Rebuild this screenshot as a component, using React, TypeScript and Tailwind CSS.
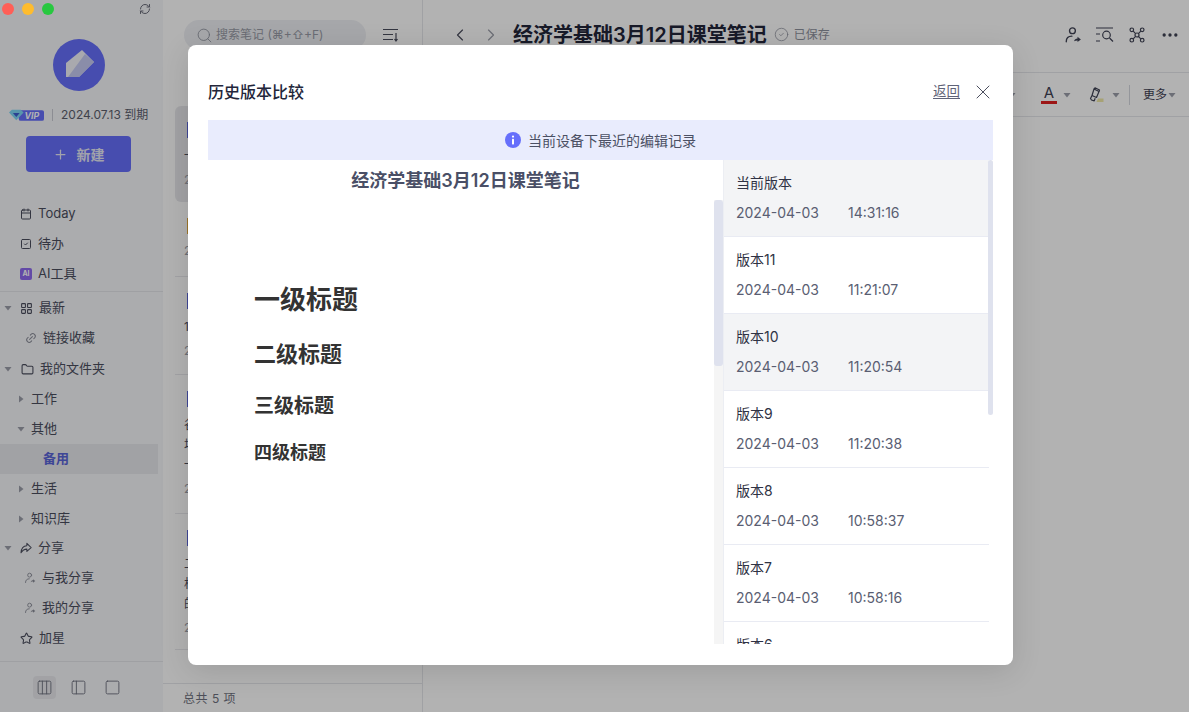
import {
  Calendar, SquareCheck, LayoutGrid, Link2, Folder, Star, Columns3, PanelLeft, Square, Search, X,
  ChevronLeft, ChevronRight, Ellipsis, RefreshCw, Plus, CircleCheck,
} from "lucide-react";

const FONT = { fontFamily: 'Inter, "Noto Sans CJK SC", sans-serif' };

const VERSIONS = [
  { name: "当前版本", time: "14:31:16", grey: true },
  { name: "版本11", time: "11:21:07" },
  { name: "版本10", time: "11:20:54", grey: true },
  { name: "版本9", time: "11:20:38" },
  { name: "版本8", time: "10:58:37" },
  { name: "版本7", time: "10:58:16" },
  { name: "版本6", time: "" },
];

const NOTES = [
  { h: "h-[96px] mt-[56px] bg-[#e8e9ec] rounded-md", mark: "bg-[#5a65d7]", lines: ["一级标题"], date: "2024-04-03" },
  { h: "h-[75px]", mark: "bg-[#e0a63c]", lines: [], date: "2024-04-02" },
  { h: "h-[98px]", mark: "bg-[#5a65d7]", lines: ["1月数据"], date: "2024-04-01" },
  { h: "h-[139px]", mark: "bg-[#5a65d7]", lines: ["谷物市场", "场景分析", "一般规律"], date: "2024-03-28" },
  { h: "h-[136px]", mark: "bg-[#5a65d7]", lines: ["二级市场", "析出价格", "的原理"], date: "2024-03-20" },
];

function Caret({ open, className = "" }: { open?: boolean; className?: string }) {
  return (
    <svg viewBox="0 0 8 8" className={`h-2 w-2 shrink-0 ${className}`} fill="#9b9eaa">
      {open ? <path d="M0.5 2h7L4 6.5z" /> : <path d="M2 0.5v7L6.5 4z" />}
    </svg>
  );
}

function SideRow({ icon, label, caret, indent = 20, gap = 6, active, className = "" }: { icon?: React.ReactNode; label: string; caret?: "open" | "closed"; indent?: number; gap?: number; active?: boolean; className?: string }) {
  return (
    <div className={`relative flex h-[30px] items-center text-[13px] ${active ? "mr-[5px] bg-[#e7e8ec] font-semibold text-[#5a65d7]" : "text-[#4b4e5e]"} ${className}`} style={{ paddingLeft: indent, gap }}>
      {caret && <Caret open={caret === "open"} className={`absolute ${indent < 25 ? "left-[4px]" : "left-[17px]"}`} />}
      {icon}
      <span>{label}</span>
    </div>
  );
}

function UserShare({ className = "" }: { className?: string }) {
  return (
    <svg viewBox="0 0 16 16" className={className} fill="none" stroke="currentColor" strokeWidth="1.2" strokeLinecap="round">
      <circle cx="7.5" cy="4.2" r="2.6" />
      <path d="M2 14c0-3.2 2-5 5-5" />
      <path d="M9 13.5c.3-1.6 1.5-2.5 3-2.5V9.5l3 2.5-3 2.3v-1.5c-1 0-2.2.2-3 .7z" fill="currentColor" stroke="none" />
    </svg>
  );
}

function Sidebar() {
  return (
    <aside className="flex h-full w-[163px] shrink-0 flex-col bg-[#f5f6f9]">
      <div className="flex h-[18px] items-start justify-end pr-[12px] pt-[3px]">
        <RefreshCw size={12} className="text-[#6a6d7a]" />
      </div>
      <div className="ml-[53px] mt-[21px] flex h-[52px] w-[52px] items-center justify-center rounded-full bg-[#666ffb]">
        <svg viewBox="0 0 30 30" className="h-[30px] w-[30px]">
          <path d="M2 13 18 0l12 12-15 15H2z" fill="#f2f3fa" />
          <path d="M21 4l9 8-15 15H4z" fill="#c6cbf2" />
        </svg>
      </div>
      <div className="mt-[14px] flex h-[20px] items-center pl-[9px] text-[12px] text-[#5c5f6e]">
        <svg viewBox="0 0 36 13" className="h-[13px] w-[35px]">
          <rect x="10" y="1" width="26" height="11" rx="2" fill="#666ffb" />
          <path d="M0 3.5 3 .5h9l3 3-7.5 8z" fill="#7fd7f5" />
          <path d="M4 4h7L7.5 8z" fill="#3d5fd0" />
          <text x="16" y="10" fontSize="9" fontStyle="italic" fontWeight="700" fill="#fff">VIP</text>
        </svg>
        <span className="mx-2 h-[12px] w-px bg-[#c9cbd3]" />
        <span>2024.07.13 到期</span>
      </div>
      <div className="ml-[26px] mt-[11px] flex h-[36px] w-[105px] items-center justify-center gap-[9px] rounded bg-[#666ffb] text-[14px] font-semibold text-[#e7e8f5]">
        <Plus size={15} strokeWidth={2} />
        <span>新建</span>
      </div>
      <div className="mt-[27px]">
        <SideRow icon={<Calendar size={12} />} label="Today" />
        <SideRow icon={<SquareCheck size={12} />} label="待办" />
        <SideRow
          icon={<span className="flex h-3 w-3 items-center justify-center rounded-[2px] bg-[#8f6af0] text-[7px] font-bold text-white">AI</span>}
          label="AI工具"
        />
      </div>
      <div className="mb-[1px] mt-[2px] h-px bg-[#e4e5ea]" />
      <SideRow caret="open" icon={<LayoutGrid size={13} />} label="最新" />
      <SideRow indent={25} icon={<Link2 size={12} className="-rotate-45 text-[#8a8d99]" />} label="链接收藏" />
      <SideRow caret="open" indent={21} icon={<Folder size={13} />} label="我的文件夹" className="mt-[1px]" />
      <SideRow caret="closed" indent={31} label="工作" />
      <SideRow caret="open" indent={31} label="其他" />
      <SideRow indent={43} label="备用" active />
      <SideRow caret="closed" indent={31} label="生活" />
      <SideRow caret="closed" indent={31} label="知识库" />
      <SideRow
        caret="open"
        icon={
          <svg viewBox="0 0 14 14" className="h-3 w-3" fill="none" stroke="currentColor" strokeWidth="1.2" strokeLinejoin="round">
            <path d="M8 1.5 13 6.5 8 11V8.3C5 8.3 3 9.5 1.2 12.5 1.5 8 4 4.8 8 4.5z" />
          </svg>
        }
        label="分享"
        className="-mt-[1px]"
      />
      <SideRow indent={24} icon={<UserShare className="h-3 w-3 text-[#8a8d99]" />} label="与我分享" />
      <SideRow indent={24} icon={<UserShare className="h-3 w-3 text-[#8a8d99]" />} label="我的分享" />
      <SideRow icon={<Star size={13} />} label="加星" />
      <div className="mt-2 h-px bg-[#e4e5ea]" />
      <div className="flex flex-1 items-center gap-[11px] pl-[33px] text-[#6f7280]">
        <span className="flex h-[23px] w-[23px] items-center justify-center rounded bg-[#e8e9ed]"><Columns3 size={17} strokeWidth={1.3} /></span>
        <span className="flex h-[23px] w-[23px] items-center justify-center"><PanelLeft size={17} strokeWidth={1.3} /></span>
        <span className="flex h-[23px] w-[23px] items-center justify-center"><Square size={17} strokeWidth={1.3} /></span>
      </div>
    </aside>
  );
}

function NoteList() {
  return (
    <section className="flex h-full w-[260px] shrink-0 flex-col border-r border-[#e6e7eb] bg-white">
      <div className="flex items-center pl-[21px] pt-5">
        <div className="flex h-[30px] w-[182px] items-center gap-[3px] rounded-full bg-[#eef0f4] pl-[12px] text-[12px] text-[#9a9da8]">
          <Search size={17} strokeWidth={1.2} className="text-[#8f929e]" />
          <span>搜索笔记 (⌘+⇧+F)</span>
        </div>
        <svg viewBox="0 0 16 14" className="ml-[17px] h-[14px] w-4" fill="none" stroke="#4b4e5e" strokeWidth="1.2">
          <path d="M0 1.5h15M0 6.5h10M0 11.5h10M13 5v8M11.5 11l1.5 2 1.5-2" />
        </svg>
      </div>
      <div className="flex-1 overflow-hidden pl-3 pr-3">
        {NOTES.map((n, i) => (
          <div key={i} className={`${n.h} ${i > 0 ? "border-b border-[#e8e9ed]" : ""} pl-[9px] pt-4`}>
            <span className={`ml-[3px] block h-4 w-[12px] ${n.mark}`} />
            <div className="mt-2 text-[12px] leading-[20px] text-[#4b4e5e]">
              {n.lines.map((l) => <div key={l} className="truncate">{l}</div>)}
            </div>
            <div className="mt-[5px] text-[12px] text-[#9a9da8]">{n.date}</div>
          </div>
        ))}
      </div>
      <div className="flex h-[29px] items-center border-t border-[#e6e7eb] pl-5 pt-[1px] text-[12px] tracking-[0.5px] text-[#6f7280]">总共 5 项</div>
    </section>
  );
}

function Editor() {
  return (
    <section className="flex h-full min-w-0 flex-1 flex-col bg-white">
      <div className="flex h-[73px] items-center justify-between border-b border-[#e6e7eb] pb-[3px] pl-[27px] pr-[9px]">
        <div className="flex items-center">
          <ChevronLeft size={20} strokeWidth={1.4} className="text-[#4b4e5e]" />
          <ChevronRight size={20} strokeWidth={1.4} className="ml-[11px] text-[#9a9da8]" />
          <h1 className="ml-3 text-[20px] font-semibold text-[#23263a]">经济学基础3月12日课堂笔记</h1>
          <CircleCheck size={15} strokeWidth={1.2} className="ml-[7px] text-[#8f929e]" />
          <span className="ml-[5px] text-[12px] text-[#8f929e]">已保存</span>
        </div>
        <div className="mt-[1px] flex items-center gap-[14px] text-[#3f4254]">
          <UserShare className="h-[18px] w-[18px]" />
          <svg viewBox="0 0 18 16" className="h-4 w-[18px]" fill="none" stroke="currentColor" strokeWidth="1.2">
            <path d="M0 1h17M0 7h4M0 14h4" />
            <circle cx="10.5" cy="8" r="3.8" />
            <path d="m13.5 11 3.5 3.5" />
          </svg>
          <svg viewBox="0 0 16 16" className="ml-[1px] h-4 w-4" fill="none" stroke="currentColor" strokeWidth="1.2">
            <circle cx="2.8" cy="2.8" r="1.8" /><circle cx="13.2" cy="2.8" r="1.8" /><circle cx="2.8" cy="13.2" r="1.8" /><circle cx="13.2" cy="13.2" r="1.8" /><circle cx="8" cy="8" r="2" />
            <path d="m4.2 4.2 2.4 2.4M11.8 4.2 9.4 6.6M4.2 11.8l2.4-2.4M11.8 11.8 9.4 9.4" />
          </svg>
          <Ellipsis size={20} className="ml-[1px]" />
        </div>
      </div>
      <div className="flex h-[44px] items-center justify-end border-b border-[#e6e7eb] pr-[13px] text-[#3f4254]">
        <Caret open className="mr-[25px]" />
        <div className="flex flex-col items-center leading-none">
          <span className="text-[15px]">A</span>
          <span className="mt-[1px] h-[3px] w-4 bg-[#e02020]" />
        </div>
        <Caret open className="ml-[6px]" />
        <svg viewBox="0 0 16 16" className="ml-[17px] h-4 w-4" fill="none" stroke="currentColor" strokeWidth="1.2" strokeLinejoin="round">
          <path d="M10 11.5h5.5V15H8.5z" fill="#f0e9a8" stroke="none" />
          <path d="M6 2 11 4.5 8.5 10.5 4 8.5zM4 8.5 2.5 11.5 3.5 13l2.7.8 1-2.5" />
          <path d="M6 2 7 .8 11.5 3 11 4.5" />
        </svg>
        <Caret open className="ml-[8px]" />
        <span className="ml-[9px] h-5 w-px bg-[#d5d7de]" />
        <span className="ml-[13px] text-[12px]">更多</span>
        <Caret open className="ml-[1px]" />
      </div>
      <div className="flex-1" />
    </section>
  );
}

function HistoryModal() {
  return (
    <div className="absolute inset-0 flex items-center justify-center bg-black/30 pb-[2px] pl-3">
      <div className="flex h-[620px] w-[825px] flex-col rounded-lg bg-white px-5 pb-[21px] shadow-[0_6px_30px_rgba(0,0,0,0.12)]">
        <div className="flex h-[75px] shrink-0 items-center justify-between pt-[18px]">
          <h2 className="text-[16px] font-medium text-[#23263a]">历史版本比较</h2>
          <div className="-mr-[2px] flex items-center gap-[11px]">
            <span className="text-[13.5px] text-[#5f6378] underline underline-offset-2">返回</span>
            <X size={24} strokeWidth={1} className="text-[#4b4e5e]" />
          </div>
        </div>
        <div className="flex h-10 shrink-0 items-center justify-center gap-[7px] bg-[#e9ecfd] text-[14px] text-[#4b5064]">
          <svg viewBox="0 0 16 16" className="h-4 w-4">
            <circle cx="8" cy="8" r="8" fill="#666ffb" />
            <circle cx="8" cy="4.6" r="1.1" fill="#fff" />
            <rect x="7" y="6.8" width="2" height="5.6" rx="0.6" fill="#fff" />
          </svg>
          <span>当前设备下最近的编辑记录</span>
        </div>
        <div className="flex min-h-0 flex-1">
          <div className="relative w-[515px] shrink-0">
            <div className="pt-[9px] text-center text-[18px] font-semibold leading-[24px] text-[#4a4f66]">经济学基础3月12日课堂笔记</div>
            <div className="pl-[46px] pt-[89px] font-bold text-[#333]">
              <div className="text-[26px] leading-[36px]">一级标题</div>
              <div className="mt-[20px] text-[22px] leading-[32px]">二级标题</div>
              <div className="mt-[22px] text-[20px] leading-[28px]">三级标题</div>
              <div className="mt-[20px] text-[18px] leading-[26px]">四级标题</div>
            </div>
            <div className="absolute bottom-0 right-0 top-[40px] w-[9px] bg-[#f5f5f5]">
              <div className="h-[166px] rounded-[3px] bg-[#dfe2ee]" />
            </div>
          </div>
          <div className="relative min-w-0 flex-1 overflow-hidden">
            <div className="mr-1 border-l border-[#eceef3]">
              {VERSIONS.map((v) => (
                <div key={v.name} className={`h-[77px] border-b border-[#e9ebf3] pl-3 pt-[13px] ${v.grey ? "bg-[#f3f4f6]" : "bg-white"}`}>
                  <div className="text-[14px] leading-[20px] text-[#2f3244]">{v.name}</div>
                  {v.time && (
                    <div className="mt-[10px] flex text-[14px] leading-[20px] text-[#5a5e72]">
                      <span className="w-[112px]">2024-04-03</span>
                      <span>{v.time}</span>
                    </div>
                  )}
                </div>
              ))}
            </div>
            <div className="absolute right-0 top-0 h-[255px] w-[5px] rounded-[3px] bg-[#dfe2ee]" />
          </div>
        </div>
      </div>
    </div>
  );
}

export default function App() {
  return (
    <div className="relative flex h-[712px] w-[1189px] overflow-hidden bg-white" style={FONT}>
      <Sidebar />
      <NoteList />
      <Editor />
      <HistoryModal />
      {/* window buttons stay bright above the dimmed page */}
      <div className="absolute left-[2px] top-[3px] flex gap-2">
        <span className="h-3 w-3 rounded-full bg-[#ff5f57]" />
        <span className="h-3 w-3 rounded-full bg-[#febc2e]" />
        <span className="h-3 w-3 rounded-full bg-[#28c840]" />
      </div>
    </div>
  );
}
